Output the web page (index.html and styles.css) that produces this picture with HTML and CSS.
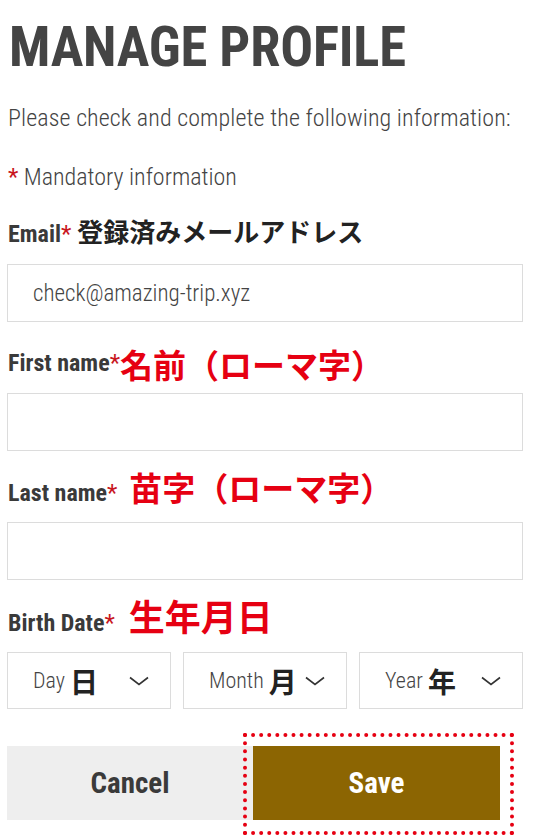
FILE: index.html
```html
<!DOCTYPE html>
<html lang="en">
<head>
<meta charset="utf-8">
<title>Manage Profile</title>
<link rel="stylesheet" href="styles.css">
</head>
<body>
<main class="page">
  <h1 class="title">MANAGE PROFILE</h1>
  <p class="intro">Please check and complete the following information:</p>
  <p class="mandatory"><span class="req">*</span> Mandatory information</p>

  <div class="field field-email">
    <div class="label-row"><span class="label">Email<span class="req">*</span></span><span class="jp jp-black">登録済みメールアドレス</span></div>
    <div class="input"><span class="input-text">check@amazing-trip.xyz</span></div>
  </div>

  <div class="field field-first">
    <div class="label-row"><span class="label">First name<span class="req">*</span></span><span class="jp jp-red jp-low">名前（ローマ字）</span></div>
    <div class="input"></div>
  </div>

  <div class="field field-last">
    <div class="label-row"><span class="label">Last name<span class="req">*</span></span><span class="jp jp-red jp-gap">苗字（ローマ字）</span></div>
    <div class="input"></div>
  </div>

  <div class="field field-birth">
    <div class="label-row"><span class="label">Birth Date<span class="req">*</span></span><span class="jp jp-red jp-big">生年月日</span></div>
    <div class="selects">
      <div class="select"><span class="select-text">Day<span class="jp-sel">日</span></span><svg class="chev" viewBox="0 0 20 10" width="20" height="10"><polyline points="1,1.5 10,8.5 19,1.5" /></svg></div>
      <div class="select"><span class="select-text">Month<span class="jp-sel">月</span></span><svg class="chev" viewBox="0 0 20 10" width="20" height="10"><polyline points="1,1.5 10,8.5 19,1.5" /></svg></div>
      <div class="select"><span class="select-text">Year<span class="jp-sel">年</span></span><svg class="chev" viewBox="0 0 20 10" width="20" height="10"><polyline points="1,1.5 10,8.5 19,1.5" /></svg></div>
    </div>
  </div>

  <div class="buttons">
    <button class="btn btn-cancel" type="button">Cancel</button>
    <div class="save-wrap"><button class="btn btn-save" type="button">Save</button></div>
  </div>
</main>
</body>
</html>
```

FILE: styles.css
```css
* { box-sizing: border-box; }
html, body { margin: 0; padding: 0; background: #fff; }
body {
  font-family: "Roboto", "Noto Sans CJK JP", sans-serif;
  font-stretch: 75%;
  color: #444;
}
.page {
  width: 545px;
  padding: 0 22px 17px 7px;
}
.title {
  margin: 19px 0 0 2px;
  font-size: 54.6px;
  line-height: 56px;
  font-weight: 700;
  color: #444;
  letter-spacing: -0.2px;
}
.intro {
  margin: 28px 0 0 1px;
  font-size: 24px;
  line-height: 30px;
  font-weight: 300;
  color: #444;
  letter-spacing: 0.1px;
}
.mandatory {
  margin: 29px 0 0 1px;
  font-size: 24px;
  line-height: 30px;
  font-weight: 300;
  color: #444;
}
.req { color: #c8161d; font-weight: 400; }

/* label rows: inline flow so the annotations sit on the label baseline */
.label-row {
  font-size: 24px;
  line-height: 1;
  padding-left: 1px;
  white-space: nowrap;
}
.field-email { margin-top: 26px; }
.field-email .label-row { margin-bottom: 18px; }
.field-first { margin-top: 26px; }
.field-first .label-row { margin-bottom: 12px; }
.field-last { margin-top: 20px; }
.field-last .label-row { margin-bottom: 17px; }
.field-birth { margin-top: 17px; }
.field-birth .label-row { margin-bottom: 17px; }

.label {
  font-size: 24px;
  font-weight: 700;
  color: #3a3a3a;
}
.label .req { font-weight: 400; }
.jp {
  font-family: "Noto Sans CJK JP", sans-serif;
  font-weight: 700;
}
.jp-black { font-size: 26px; color: #222; margin-left: 6px; }
.jp-red { font-size: 33px; color: #e60012; }
.jp-low { vertical-align: -7px; }
.jp-gap { margin-left: 12px; }
.jp-big { font-size: 36px; margin-left: 14px; }
.input {
  height: 58px;
  border: 1px solid #dcdcdc;
  display: flex;
  align-items: center;
  padding-left: 25px;
}
.input-text {
  font-size: 23px;
  font-weight: 300;
  color: #444;
}
.selects {
  display: flex;
  gap: 12px;
}
.select {
  width: 164px;
  height: 57px;
  border: 1px solid #dcdcdc;
  display: flex;
  align-items: center;
  justify-content: space-between;
  padding: 0 21px 0 25px;
}
.select-text {
  font-size: 22px;
  line-height: 1;
  font-weight: 300;
  color: #444;
  display: flex;
  align-items: center;
}
.jp-sel {
  font-family: "Noto Sans CJK JP", sans-serif;
  font-weight: 700;
  font-size: 28px;
  line-height: 1;
  color: #222;
  margin-left: 5px;
}
.chev { display: block; }
.chev polyline { fill: none; stroke: #333; stroke-width: 1.6; }
.buttons {
  display: flex;
  margin-top: 37px;
}
.btn {
  border: 0;
  margin: 0;
  height: 74px;
  font-family: "Roboto", sans-serif;
  font-stretch: 75%;
  font-size: 29px;
  font-weight: 700;
  cursor: pointer;
}
.btn-cancel {
  width: 246px;
  background: #eeeeee;
  color: #3a3a3a;
}
.save-wrap { position: relative; width: 247px; }
.save-wrap::after {
  content: "";
  position: absolute;
  top: -13px;
  left: -10px;
  right: -14px;
  bottom: -15px;
  border: 4px dotted #e60012;
  pointer-events: none;
}
.btn-save {
  width: 247px;
  background: #8c6502;
  color: #fff;
  display: block;
}
```
